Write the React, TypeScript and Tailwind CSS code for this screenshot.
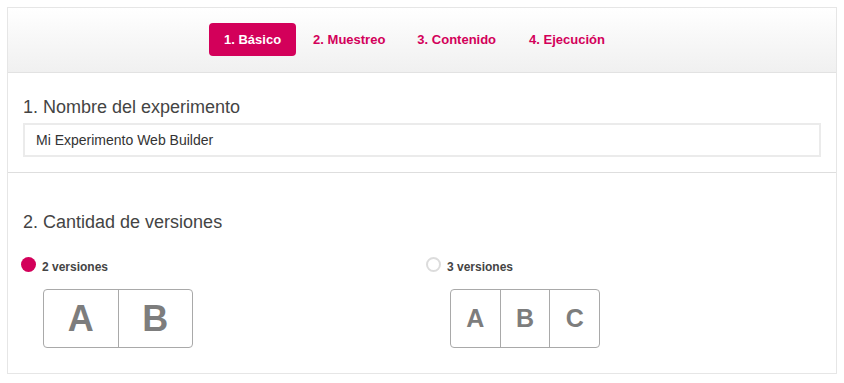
const tabs = ['1. Básico', '2. Muestreo', '3. Contenido', '4. Ejecución']

function VersionBox({ letters, big }: { letters: string[]; big: boolean }) {
	return (
		<div className="flex h-[59px] w-[150px] overflow-hidden rounded-[4px] border border-[#a9a9a9] bg-white">
			{letters.map((l, i) => (
				<div
					key={l}
					className={`flex flex-1 items-center justify-center font-bold text-[#7d7d7d] ${i > 0 ? 'border-l border-[#a9a9a9]' : ''} ${big ? 'text-[36px]' : 'text-[25px]'}`}
				>
					{l}
				</div>
			))}
		</div>
	)
}

function Option({ label, checked, letters, big, indent }: { label: string; checked: boolean; letters: string[]; big: boolean; indent: string }) {
	return (
		<div className="flex flex-col">
			<div className="flex items-center gap-[6px]">
				{checked ? (
					<span className="h-[15px] w-[15px] rounded-full bg-[#d3005a]" />
				) : (
					<span className="h-[15px] w-[15px] rounded-full border-2 border-[#dcdcdc] bg-white" />
				)}
				<span className="mt-[3px] translate-y-[1px] font-bold text-[12px] text-[#444]">{label}</span>
			</div>
			<div className={`mt-[14px] ${indent}`}>
				<VersionBox letters={letters} big={big} />
			</div>
		</div>
	)
}

export default function App() {
	return (
		<div className="min-h-[383px] bg-white p-[7px] font-['Liberation_Sans',Arial,sans-serif]">
			<div className="border border-[#e6e6e6]">
				<div className="flex border-b border-[#e2e2e2] bg-gradient-to-b from-white to-[#f0f0f0] pt-[15px] pb-[16px] pl-[201px]">
					{tabs.map((t, i) => (
						<div
							key={t}
							className={`flex h-[33px] items-center rounded-[4px] font-bold text-[13px] ${i === 0 ? 'bg-[#d3005a] px-[15px] text-white' : 'px-4 text-[#d3005a]'} ${i === 1 ? 'pl-[17px]' : ''} ${i === 2 ? 'pr-[17px]' : ''}`}
						>
							{t}
						</div>
					))}
				</div>

				<div className="border-b border-[#dedede] px-[15px] pt-[23px] pb-[15px]">
					<h2 className="text-[18px] text-[#444] leading-[22px]">1. Nombre del experimento</h2>
					<div className="mt-[5px] flex h-[34px] items-center border-2 border-[#ebebeb] px-[11px] text-[14px] text-[#333]">
						Mi Experimento Web Builder
					</div>
				</div>

				<div className="pt-[38px] pb-[25px]">
					<h2 className="px-[15px] text-[18px] text-[#444] leading-[22px]">2. Cantidad de versiones</h2>
					<div className="mt-[21px] flex pl-[13px]">
						<div className="w-[405px]">
							<Option label="2 versiones" checked letters={['A', 'B']} big indent="ml-[22px]" />
						</div>
						<Option label="3 versiones" checked={false} letters={['A', 'B', 'C']} big={false} indent="ml-[24px]" />
					</div>
				</div>
			</div>
		</div>
	)
}
